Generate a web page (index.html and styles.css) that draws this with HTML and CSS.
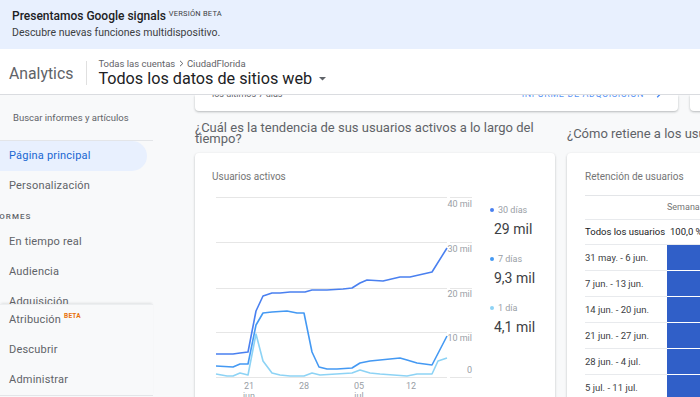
FILE: index.html
```html
<!DOCTYPE html>
<html lang="es">
<head>
<meta charset="utf-8">
<link rel="stylesheet" href="styles.css">
</head>
<body>
<div class="banner">
  <div class="banner-title">Presentamos Google signals <span class="beta-tag">VERSIÓN BETA</span></div>
  <div class="banner-sub">Descubre nuevas funciones multidispositivo.</div>
</div>
<header class="topbar">
  <div class="brand">Analytics</div>
  <div class="divider-v"></div>
  <div class="account">
    <div class="crumbs">Todas las cuentas <svg class="chev" width="5" height="7" viewBox="0 0 5 7"><path d="M1 0.8 L3.8 3.5 L1 6.2" fill="none" stroke="#5f6368" stroke-width="1"/></svg> CiudadFlorida</div>
    <div class="view">Todos los datos de sitios web <svg class="caret" width="7" height="4" viewBox="0 0 7 4"><path d="M0 0 L7 0 L3.5 3.5 Z" fill="#5f6368"/></svg></div>
  </div>
</header>
<div class="layout">
  <nav class="sidebar">
    <div class="nav-scroll">
      <div class="search">Buscar informes y artículos</div>
      <div class="nav-item active">Página principal</div>
      <div class="nav-item">Personalización</div>
      <div class="nav-section">INFORMES</div>
      <div class="nav-item">En tiempo real</div>
      <div class="nav-item">Audiencia</div>
      <div class="nav-item">Adquisición</div>
      <div class="nav-item">Comportamiento</div>
    </div>
    <div class="nav-bottom">
      <div class="nav-item">Atribución <span class="beta">BETA</span></div>
      <div class="nav-item">Descubrir</div>
      <div class="nav-item last">Administrar</div>
    </div>
  </nav>
  <main class="main">
    <div class="top-row">
      <div class="card partial wide">
        <div class="partial-inner">
          <span class="muted">los últimos 7 días</span>
          <span class="link">INFORME DE ADQUISICIÓN <svg width="6" height="8" viewBox="0 0 6 8"><path d="M1.2 0.8 L4.4 4 L1.2 7.2" fill="none" stroke="#4285f4" stroke-width="1.3"/></svg></span>
        </div>
      </div>
      <div class="card partial narrow"></div>
    </div>
    <div class="cols">
      <section class="col col-left">
        <div class="heading"><h2>¿Cuál es la tendencia de sus usuarios activos a lo largo del tiempo?</h2></div>
        <div class="card chart-card">
          <div class="card-title">Usuarios activos</div>
          <div class="chart-row">
            <svg class="chart" width="262" height="205" viewBox="212 192 262 205">
              <g stroke="#e6e6e6" stroke-width="1">
                <line x1="216" y1="197.5" x2="447" y2="197.5"/><line x1="450" y1="197.5" x2="472" y2="197.5"/>
                <line x1="216" y1="242.5" x2="447" y2="242.5"/><line x1="450" y1="242.5" x2="472" y2="242.5"/>
                <line x1="216" y1="288.5" x2="447" y2="288.5"/><line x1="450" y1="288.5" x2="472" y2="288.5"/>
                <line x1="216" y1="332.5" x2="447" y2="332.5"/><line x1="450" y1="332.5" x2="472" y2="332.5"/>
                <line x1="216" y1="377.5" x2="447" y2="377.5"/><line x1="450" y1="377.5" x2="472" y2="377.5"/>
              </g>
              <g class="ylab" text-anchor="end">
                <text x="472" y="207">40 mil</text>
                <text x="472" y="252">30 mil</text>
                <text x="472" y="297">20 mil</text>
                <text x="472" y="341">10 mil</text>
                <text x="472" y="373">0</text>
              </g>
              <g class="xlab" text-anchor="middle">
                <text x="249" y="389">21</text><text x="249" y="399">jun</text>
                <text x="304" y="389">28</text>
                <text x="359" y="389">05</text><text x="359" y="399">jul</text>
                <text x="411" y="389">12</text>
              </g>
              <polyline fill="none" stroke="#8dd3f5" stroke-width="1.6" stroke-linejoin="round" points="216,374 227,376 233,376 240,373 248,375 256,334 263,361 272,373 280,375 290,376 304,376 312,373 320,375 352,373 360,370 370,373 380,374 407,376 417,374 432,374 438,361 447,358"/>
              <polyline fill="none" stroke="#4499f3" stroke-width="1.6" stroke-linejoin="round" points="216,366 233,367 240,364 248,364 256,325 263,313 272,312 287,311 297,313 304,313 312,352 319,367 327,369 337,369 352,368 360,363 370,361 400,358 407,360 417,363 432,365 447,336"/>
              <polyline fill="none" stroke="#4a80f0" stroke-width="1.6" stroke-linejoin="round" points="216,354 233,354 240,353 248,352 256,311 263,296 272,293 280,293 290,292 305,292 312,290 327,290 343,289 352,288 360,283 367,280 383,281 400,277 410,277 432,272 447,248"/>
            </svg>
            <div class="legend">
              <div class="legend-item">
                <div class="legend-label"><span class="dot d30"></span>30 días</div>
                <div class="legend-value">29 mil</div>
              </div>
              <div class="legend-item">
                <div class="legend-label"><span class="dot d7"></span>7 días</div>
                <div class="legend-value">9,3 mil</div>
              </div>
              <div class="legend-item">
                <div class="legend-label"><span class="dot d1"></span>1 día</div>
                <div class="legend-value">4,1 mil</div>
              </div>
            </div>
          </div>
        </div>
      </section>
      <section class="col col-right">
        <div class="heading"><h2>¿Cómo retiene a los usuarios?</h2></div>
        <div class="card ret-card">
          <div class="card-title">Retención de usuarios</div>
          <div class="ret-table">
            <div class="ret-row ret-head"><div class="ret-label"></div><div class="ret-cell">Semana 0</div></div>
            <div class="ret-row ret-all"><div class="ret-label">Todos los usuarios</div><div class="ret-cell">100,0 %</div></div>
            <div class="ret-row"><div class="ret-label">31 may. - 6 jun.</div><div class="ret-cell blue"></div></div>
            <div class="ret-row"><div class="ret-label">7 jun. - 13 jun.</div><div class="ret-cell blue"></div></div>
            <div class="ret-row"><div class="ret-label">14 jun. - 20 jun.</div><div class="ret-cell blue"></div></div>
            <div class="ret-row"><div class="ret-label">21 jun. - 27 jun.</div><div class="ret-cell blue"></div></div>
            <div class="ret-row"><div class="ret-label">28 jun. - 4 jul.</div><div class="ret-cell blue"></div></div>
            <div class="ret-row"><div class="ret-label">5 jul. - 11 jul.</div><div class="ret-cell blue"></div></div>
          </div>
        </div>
      </section>
    </div>
  </main>
</div>
</body>
</html>
```

FILE: styles.css
```css
html, body {
  margin: 0;
  padding: 0;
}
body {
  width: 700px;
  height: 397px;
  overflow: hidden;
  font-family: Roboto, "Liberation Sans", Arial, sans-serif;
  background: #f8f9fa;
  color: #202124;
}

/* Banner */
.banner {
  height: 49px;
  box-sizing: border-box;
  background: #e8f0fe;
  padding: 9px 12px 0;
}
.banner-title {
  font-size: 12px;
  font-weight: 500;
  line-height: 14px;
  color: #202124;
}
.beta-tag {
  font-size: 7.5px;
  font-weight: 400;
  vertical-align: top;
  line-height: 9px;
  letter-spacing: 0.2px;
  color: #3c4043;
}
.banner-sub {
  margin-top: 4px;
  font-size: 10.5px;
  line-height: 12px;
  color: #3c4043;
}

/* Top bar */
.topbar {
  height: 46px;
  box-sizing: border-box;
  background: #fff;
  border-bottom: 1px solid #dadce0;
  display: flex;
  align-items: center;
  padding-left: 9px;
  padding-top: 3px;
}
.brand {
  font-size: 15.8px;
  color: #5f6368;
}
.divider-v {
  width: 1px;
  height: 24px;
  background: #e0e0e0;
  margin: 0 11px 0 13px;
}
.account {
  display: flex;
  flex-direction: column;
}
.crumbs {
  font-size: 9.5px;
  line-height: 11px;
  color: #5f6368;
}
.chev {
  margin: 0 1px;
}
.view {
  font-size: 16.2px;
  line-height: 20px;
  color: #202124;
}
.caret {
  margin-left: 3px;
  vertical-align: middle;
}

/* Layout */
.layout {
  display: flex;
  height: 302px;
}
.sidebar {
  width: 155px;
  flex: none;
  display: flex;
  flex-direction: column;
  height: 302px;
}
.nav-scroll {
  flex: 1;
  overflow: hidden;
}
.search {
  height: 46px;
  box-sizing: border-box;
  width: 153px;
  padding-left: 13px;
  display: flex;
  align-items: center;
  font-size: 9.5px;
  color: #5f6368;
  border-bottom: 1px solid #e3e5e8;
}
.nav-item {
  height: 30px;
  line-height: 30px;
  padding-left: 9px;
  font-size: 11px;
  letter-spacing: 0.2px;
  color: #5f6368;
  white-space: nowrap;
}
.nav-item.active {
  width: 147px;
  box-sizing: border-box;
  background: #e8f0fe;
  color: #1967d2;
  border-radius: 0 15px 15px 0;
}
.nav-section {
  height: 26px;
  box-sizing: border-box;
  padding-top: 11px;
  font-size: 8px;
  line-height: 10px;
  font-weight: 500;
  letter-spacing: 1px;
  color: #5f6368;
  text-indent: -16px;
  white-space: nowrap;
}
.nav-bottom {
  height: 93px;
  flex: none;
  width: 153px;
  box-sizing: border-box;
  background: #f8f9fa;
  border-top: 1px solid #eceef0;
  box-shadow: 0 -2px 2px -1px rgba(60, 64, 67, 0.12);
}
.nav-item.last {
  border-bottom: 1px solid #e3e5e8;
}
.beta {
  font-size: 6.5px;
  font-weight: 700;
  color: #e8710a;
  vertical-align: top;
  line-height: 22px;
  letter-spacing: 0.2px;
}

/* Main */
.main {
  flex: 1;
  overflow: hidden;
  padding-left: 40px;
}
.card {
  background: #fff;
  border-radius: 4px;
  box-shadow: 0 1px 2px rgba(60, 64, 67, 0.25), 0 1px 3px rgba(60, 64, 67, 0.1);
}
.top-row {
  display: flex;
  gap: 12px;
  height: 16px;
}
.partial {
  border-radius: 0 0 4px 4px;
  overflow: hidden;
  flex: none;
}
.wide {
  width: 483px;
}
.narrow {
  width: 60px;
}
.partial-inner {
  display: flex;
  justify-content: space-between;
  align-items: center;
  margin-top: -7px;
  height: 12px;
  padding: 0 16px 0 17px;
  font-size: 9px;
}
.muted {
  color: #5f6368;
}
.link {
  color: #5b95f5;
  letter-spacing: 0.6px;
  display: flex;
  align-items: center;
  gap: 12px;
}

.cols {
  display: flex;
  gap: 12px;
  margin-top: 2px;
}
.col {
  flex: none;
  display: flex;
  flex-direction: column;
}
.col-left {
  width: 360px;
}
.col-right {
  width: 300px;
}
.heading {
  height: 40px;
  display: flex;
  align-items: center;
}
.heading h2 {
  margin: 0;
  font-size: 13px;
  line-height: 11px;
  font-weight: 400;
  color: #5f6368;
  white-space: normal;
}
.col-right .heading h2 {
  white-space: nowrap;
}
.chart-card {
  height: 260px;
  padding: 18px 0 0 17px;
  box-sizing: border-box;
}
.card-title {
  font-size: 10px;
  line-height: 12px;
  color: #757575;
}
.chart-row {
  display: flex;
  margin-top: 9px;
}
.chart {
  display: block;
  flex: none;
}
.ylab text, .xlab text {
  font-size: 9px;
  fill: #9aa0a6;
  font-family: Roboto, "Liberation Sans", sans-serif;
}
.legend {
  margin-left: 16px;
  display: flex;
  flex-direction: column;
  gap: 14px;
  padding-top: 12px;
}
.legend-label {
  font-size: 9px;
  line-height: 12px;
  color: #9aa0a6;
  display: flex;
  align-items: center;
}
.dot {
  width: 4px;
  height: 4px;
  border-radius: 50%;
  margin-right: 4px;
}
.d30 { background: #4a80f0; }
.d7 { background: #4499f3; }
.d1 { background: #8dd3f5; }
.legend-value {
  margin-top: 3px;
  padding-left: 4px;
  font-size: 14px;
  line-height: 20px;
  color: #3c4043;
}

.ret-card {
  height: 260px;
  padding: 18px 0 0 18px;
  box-sizing: border-box;
}
.ret-table {
  margin-top: 12px;
  border-top: 1px solid #e3e5e8;
}
.ret-row {
  display: flex;
  height: 26px;
  box-sizing: border-box;
}
.ret-label {
  width: 82px;
  flex: none;
  box-sizing: border-box;
  border-bottom: 1px solid #e8eaed;
  font-size: 9.5px;
  line-height: 25px;
  color: #3c4043;
  white-space: nowrap;
}
.ret-cell {
  flex: 1;
  font-size: 9.5px;
  line-height: 25px;
  color: #202124;
  white-space: nowrap;
  box-sizing: border-box;
  border-bottom: 1px solid #e8eaed;
}
.ret-head {
  height: 24px;
}
.ret-head .ret-label, .ret-head .ret-cell {
  line-height: 23px;
}
.ret-head .ret-cell {
  font-size: 9px;
  color: #757575;
  padding-left: 0;
}
.ret-all {
  height: 25px;
}
.ret-all .ret-label, .ret-all .ret-cell {
  line-height: 24px;
  color: #202124;
}
.ret-all .ret-cell {
  padding-left: 3px;
}
.ret-cell.blue {
  background: #305fc8;
  border-bottom: 1px solid #fff;
}
```
